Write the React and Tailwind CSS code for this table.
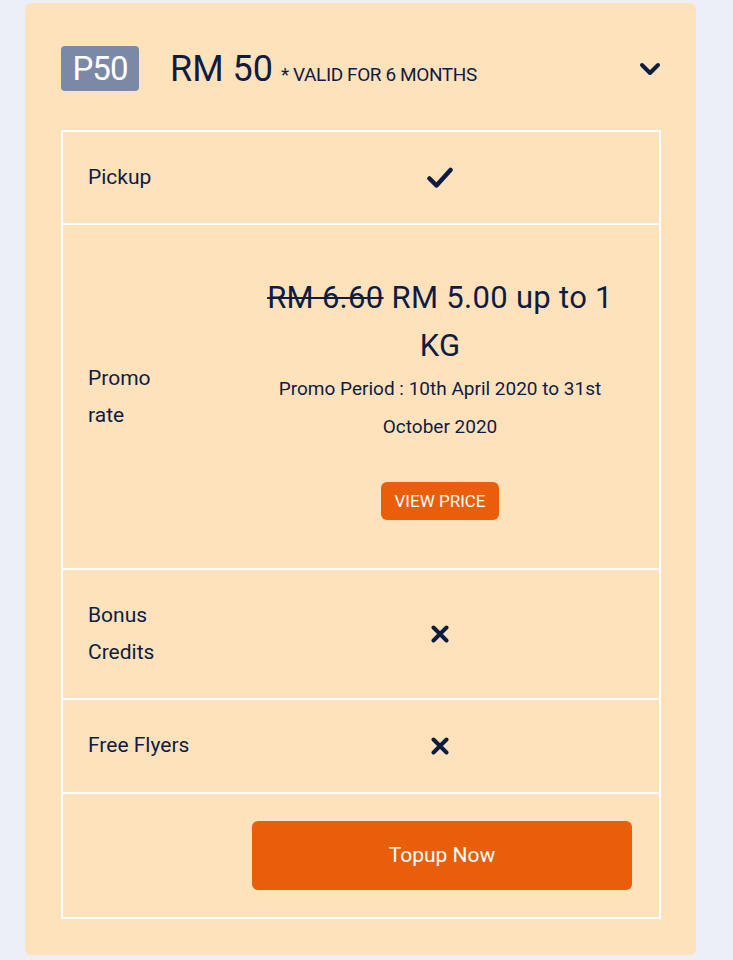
import { ChevronDown } from "lucide-react";

const navy = "text-[#0e1c43]";

function Check() {
  return (
    <svg width="26" height="22" viewBox="0 0 26 22" fill="none">
      <path d="M2.5 11.5 L9.5 18.5 L23.5 3" stroke="#0e1c43" strokeWidth="4.5" strokeLinecap="round" strokeLinejoin="round" />
    </svg>
  );
}

function Cross() {
  return (
    <svg width="18" height="18" viewBox="0 0 18 18" fill="none">
      <path d="M2.5 2.5 L15.5 15.5 M15.5 2.5 L2.5 15.5" stroke="#0e1c43" strokeWidth="4" strokeLinecap="round" />
    </svg>
  );
}

function Row({ label, children, className = "" }) {
  return (
    <div className={`flex items-center ${className}`}>
      <div className={`w-[158px] shrink-0 pl-[25px] pr-[20px] text-[21px] leading-[37px] ${navy}`}>
        {label}
      </div>
      <div className="flex flex-1 items-center justify-center px-[30px]">{children}</div>
    </div>
  );
}

export default function App() {
  return (
    <div
      className="min-h-[960px] bg-[#eceff5] pl-[25px] pr-[37px] pt-[3px]"
      style={{ fontFamily: "Roboto, 'Noto Sans', sans-serif" }}
    >
      <div className="rounded-md bg-[#fee2bc] pl-[36px] pr-[35px] pb-[36px] pt-[43px]">
        <div className="flex items-center">
          <div className="flex h-[45px] w-[78px] items-center justify-center rounded-[4px] bg-[#7a8aa6] text-[33px] tracking-[-1px] text-white">
            P50
          </div>
          <div className={`ml-[31px] flex items-baseline ${navy}`}>
            <span className="text-[36px] leading-[44px]">RM 50</span>
            <span className="ml-[8px] text-[19px] tracking-[-0.4px]">* VALID FOR 6 MONTHS</span>
          </div>
          <ChevronDown className="ml-auto mr-[-5px] text-[#0e1c43]" size={32} strokeWidth={3} />
        </div>

        <div className="mt-[39px] border-2 border-white divide-y-2 divide-white">
          <Row label="Pickup" className="py-[27px]">
            <Check />
          </Row>

          <Row label={<>Promo<br />rate</>} className="h-[345px]">
            <div className={`flex flex-col items-center text-center ${navy}`}>
              <div className="text-[31px] leading-[48px] tracking-[0.3px]">
                <span className="line-through decoration-2">RM 6.60</span> RM 5.00 up to 1 KG
              </div>
              <div className="text-[19px] leading-[38px]">
                Promo Period : 10th April 2020 to 31st October 2020
              </div>
              <button className="mt-[36px] rounded-md bg-[#e85e0b] px-[14px] py-[8px] text-[17px] leading-[22px] text-white">
                VIEW PRICE
              </button>
            </div>
          </Row>

          <Row label={<>Bonus<br />Credits</>} className="py-[27px]">
            <Cross />
          </Row>

          <Row label="Free Flyers" className="pt-[27px] pb-[28px]">
            <Cross />
          </Row>

          <div className="flex justify-end px-[27px] py-[27px]">
            <button className="h-[69px] w-[380px] rounded-md bg-[#e85e0b] text-[21px] text-white">
              Topup Now
            </button>
          </div>
        </div>
      </div>
    </div>
  );
}
